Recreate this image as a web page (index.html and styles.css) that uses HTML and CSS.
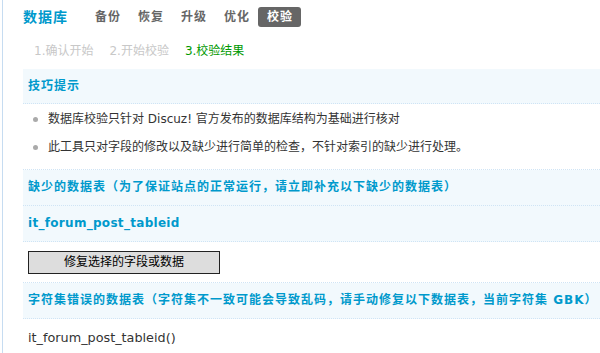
FILE: index.html
```html
<!DOCTYPE html>
<html lang="zh-CN">
<head>
<meta charset="utf-8">
<title>数据库 - 校验</title>
<link rel="stylesheet" href="styles.css">
</head>
<body>
<div class="frame">
  <div class="main">
    <div class="itemtitle">
      <h3 class="title">数据库</h3>
      <ul class="tabs">
        <li><a href="#">备份</a></li>
        <li><a href="#">恢复</a></li>
        <li><a href="#">升级</a></li>
        <li><a href="#">优化</a></li>
        <li class="current"><a href="#">校验</a></li>
      </ul>
    </div>
    <div class="steps">
      <span class="step done">1.确认开始</span>
      <span class="step done">2.开始校验</span>
      <span class="step active">3.校验结果</span>
    </div>
    <div class="tb">
      <div class="bar bar-first">技巧提示</div>
      <ul class="tips">
        <li>数据库校验只针对 Discuz! 官方发布的数据库结构为基础进行核对</li>
        <li>此工具只对字段的修改以及缺少进行简单的检查，不针对索引的缺少进行处理。</li>
      </ul>
      <div class="bar">缺少的数据表（为了保证站点的正常运行，请立即补充以下缺少的数据表）</div>
      <div class="bar bar-name">it_forum_post_tableid</div>
      <div class="btnrow">
        <button class="btn" type="button">修复选择的字段或数据</button>
      </div>
      <div class="bar">字符集错误的数据表（字符集不一致可能会导致乱码，请手动修复以下数据表，当前字符集 GBK）</div>
      <div class="row">it_forum_post_tableid()</div>
    </div>
  </div>
</div>
</body>
</html>
```
FILE: styles.css
```css
html, body {
  margin: 0;
  padding: 0;
  background: #fff;
}
body {
  font-family: "DejaVu Sans", "Noto Sans CJK SC", sans-serif;
  font-size: 12px;
  color: #333;
  overflow: hidden;
}
.frame {
  margin-left: 2px;
  border-left: 1px solid #c6dcf1;
  min-height: 353px;
}
.main {
  padding-left: 20px;
}
.itemtitle {
  display: flex;
  align-items: center;
  height: 34px;
}
.title {
  margin: 0 18px 0 0;
  font-size: 14px;
  font-weight: bold;
  letter-spacing: 1px;
  color: #0099cc;
  line-height: 20px;
}
.tabs {
  display: flex;
  list-style: none;
  margin: 0;
  padding: 0;
}
.tabs a {
  display: block;
  height: 20px;
  line-height: 20px;
  padding: 0 8px 0 9px;
  font-size: 12px;
  font-weight: bold;
  letter-spacing: 1px;
  color: #666;
  text-decoration: none;
  border-radius: 3px;
}
.tabs .current a {
  background: #666;
  color: #fff;
}
.steps {
  height: 35px;
  line-height: 35px;
  padding-left: 11px;
  display: flex;
  gap: 16px;
}
.step.done {
  color: #c8c8c8;
}
.step.active {
  color: #009900;
}
.tb {
  width: 100%;
}
.bar {
  height: 35px;
  line-height: 35px;
  padding-left: 5px;
  background: #f2f9fd;
  border-bottom: 1px dotted #cfe4f5;
  color: #0099cc;
  font-weight: bold;
  letter-spacing: 1px;
  white-space: nowrap;
  overflow: hidden;
}
.bar-first {
  height: 34px;
  line-height: 34px;
}
.bar-name {
  letter-spacing: 0.3px;
}
.tips {
  list-style: none;
  margin: 0;
  padding: 1px 0 8px;
  border-bottom: 1px dotted #cfe4f5;
}
.tips li {
  position: relative;
  height: 28px;
  line-height: 28px;
  padding-left: 25px;
  white-space: nowrap;
}
.tips li::before {
  content: "";
  position: absolute;
  left: 10px;
  top: 12px;
  width: 5px;
  height: 5px;
  border-radius: 50%;
  background: #aaa;
}
.btnrow {
  height: 31px;
  padding: 9px 0 0 5px;
  border-bottom: 1px dotted #cfe4f5;
}
.btn {
  display: block;
  margin: 0;
  width: 192px;
  height: 23px;
  padding: 0;
  border: 1px solid #222;
  background: #dddddd;
  font-family: "DejaVu Sans", "Noto Sans CJK SC", sans-serif;
  font-size: 12px;
  color: #000;
  line-height: 21px;
}
.row {
  height: 38px;
  line-height: 38px;
  padding-left: 5px;
  font-size: 12.8px;
  color: #333;
}
```
